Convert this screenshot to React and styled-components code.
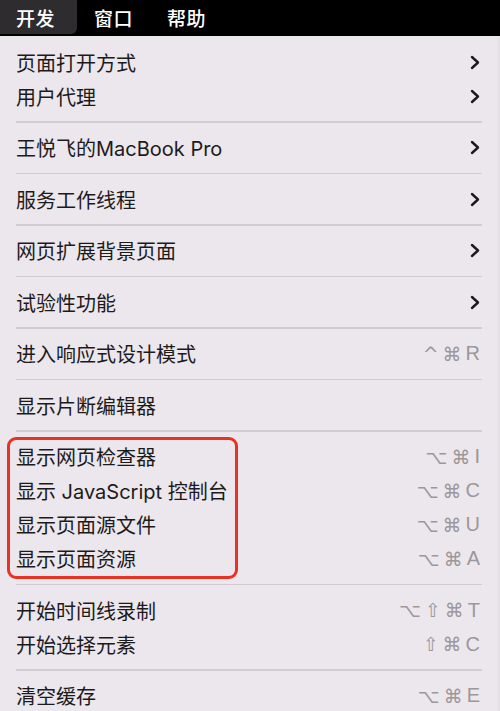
import React from 'react'
import styled, { createGlobalStyle } from 'styled-components'

const Global = createGlobalStyle`
  html, body {
    margin: 0;
    padding: 0;
    background: #ece7ec;
    overflow: hidden;
  }
  body {
    font-family: "Inter", "Noto Sans CJK SC", sans-serif;
  }
`

const Page = styled.div`
  width: 500px;
  height: 711px;
  overflow: hidden;
  display: flex;
  flex-direction: column;
`

const MenuBar = styled.div`
  height: 36px;
  background: #000;
  display: flex;
  align-items: flex-start;
  flex-shrink: 0;
`

const BarItem = styled.div`
  height: 34px;
  display: flex;
  align-items: center;
  padding: 0 ${p => (p.active ? '22px' : '17px')} 0 ${p => (p.active ? '16px' : '17px')};
  color: #fff;
  font-size: 19px;
  font-weight: 500;
  letter-spacing: 0.5px;
  background: ${p => (p.active ? '#2e2c2e' : 'transparent')};
  border-radius: 0 0 6px 0;
`

const Menu = styled.div`
  flex: 1;
  margin-top: 2px;
  padding-top: 7px;
  background: #ece7ec;
  box-shadow: inset -4px 0 4px -3px rgba(0, 0, 0, 0.06);
  display: flex;
  flex-direction: column;
`

const Row = styled.div`
  height: 34px;
  flex-shrink: 0;
  display: flex;
  align-items: center;
  justify-content: space-between;
  padding: 0 20px 0 16px;
  font-size: 20px;
  color: #1c1b1c;
`

const Shortcut = styled.span`
  color: #9b979b;
  display: flex;
  gap: 4px;
  align-items: center;
`

const Key = styled.span`
  font-family: ${p => (p.latin ? '"Liberation Sans", sans-serif' : '"DejaVu Sans", sans-serif')};
  font-size: ${p => (p.latin ? '20px' : '19px')};
`

const Separator = styled.div`
  height: 17.5px;
  flex-shrink: 0;
  display: flex;
  align-items: center;
  padding: 0 18px 0 16px;

  &::after {
    content: '';
    display: block;
    width: 100%;
    height: 1.5px;
    background: #d1ccd1;
  }
`

const Highlight = styled.div`
  margin: -3px 262px -3px 7px;
  border: 3px solid #ea3224;
  border-radius: 9px;
  display: flex;
  flex-direction: column;
  position: relative;
  z-index: 1;

  ${Row} {
    margin: 0 -265px 0 -10px;
  }
`

const Chevron = () => (
  <svg width="10" height="15" viewBox="0 0 10 15">
    <path d="M2 2 L8 7.5 L2 13" fill="none" stroke="#1c1b1c" strokeWidth="2.4" strokeLinecap="round" strokeLinejoin="round" />
  </svg>
)

const keysOf = s =>
  s.split('').map((c, i) => (
    <Key key={i} latin={/[A-Z]/.test(c)}>{c}</Key>
  ))

const Item = ({ label, sub, keys }) => (
  <Row>
    <span>{label}</span>
    {sub && <Chevron />}
    {keys && <Shortcut>{keysOf(keys)}</Shortcut>}
  </Row>
)

export default function App() {
  return (
    <Page>
      <Global />
      <MenuBar>
        <BarItem active>开发</BarItem>
        <BarItem>窗口</BarItem>
        <BarItem>帮助</BarItem>
      </MenuBar>
      <Menu>
        <Item label="页面打开方式" sub />
        <Item label="用户代理" sub />
        <Separator />
        <Item label="王悦飞的MacBook Pro" sub />
        <Separator />
        <Item label="服务工作线程" sub />
        <Separator />
        <Item label="网页扩展背景页面" sub />
        <Separator />
        <Item label="试验性功能" sub />
        <Separator />
        <Item label="进入响应式设计模式" keys="^⌘R" />
        <Separator />
        <Item label="显示片断编辑器" />
        <Separator />
        <Highlight>
          <Item label="显示网页检查器" keys="⌥⌘I" />
          <Item label="显示 JavaScript 控制台" keys="⌥⌘C" />
          <Item label="显示页面源文件" keys="⌥⌘U" />
          <Item label="显示页面资源" keys="⌥⌘A" />
        </Highlight>
        <Separator />
        <Item label="开始时间线录制" keys="⌥⇧⌘T" />
        <Item label="开始选择元素" keys="⇧⌘C" />
        <Separator />
        <Item label="清空缓存" keys="⌥⌘E" />
      </Menu>
    </Page>
  )
}
